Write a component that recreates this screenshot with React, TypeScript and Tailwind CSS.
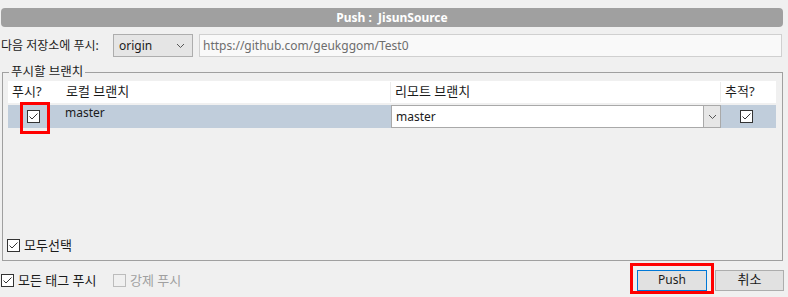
import React from 'react';

const font = "font-['Noto_Sans','Noto_Sans_CJK_KR',sans-serif]";

function Check({ checked = true, disabled = false }: { checked?: boolean; disabled?: boolean }) {
  return (
    <span
      className={`flex h-[13px] w-[13px] shrink-0 items-center justify-center border ${
        disabled ? 'border-[#bcbcbc] bg-[#f0f0f0]' : 'border-[#333333] bg-white'
      }`}
    >
      {checked && (
        <svg width="11" height="11" viewBox="0 0 11 11">
          <path d="M1.5 5.5 L4 8 L9.5 2.5" fill="none" stroke="#333333" strokeWidth="1" />
        </svg>
      )}
    </span>
  );
}

function Chevron() {
  return (
    <svg width="9" height="6" viewBox="0 0 9 6">
      <path d="M1 1 L4.5 4.5 L8 1" fill="none" stroke="#555555" strokeWidth="1" />
    </svg>
  );
}

export default function App() {
  return (
    <div className={`relative h-[297px] w-[788px] overflow-hidden bg-[#f0f0f0] text-[12px] text-[#1b1b1b] ${font}`}>
      {/* title */}
      <div className="pl-[1px] pt-[8px]">
        <div className="flex h-[19px] w-[782px] items-center justify-center rounded-[4px] bg-[#a0a0a0] font-bold text-white">
          Push :&nbsp; JisunSource
        </div>
      </div>

      {/* remote row */}
      <div className="mt-[7px] flex h-[23px] items-center">
        <span className="w-[113px] pl-[1px] leading-none">다음 저장소에 푸시:</span>
        <div className="flex h-[23px] w-[80px] items-center justify-between border border-[#adadad] bg-[#e5e5e5] pl-[5px] pr-[7px]">
          <span>origin</span>
          <Chevron />
        </div>
        <div className="ml-[6px] flex h-[23px] w-[583px] items-center border border-[#d0d0d0] bg-[#f9f9f9] pl-[3px] text-[#6d6d6d]">
          https://github.com/geukggom/Test0
        </div>
      </div>

      {/* branch group */}
      <div className="relative ml-[2px] mt-[15px] flex h-[189px] w-[781px] flex-col border border-[#a0a0a0]">
        <span className="absolute -top-[9px] left-[6px] bg-[#f0f0f0] px-[2px] text-[12.5px] leading-[16px]">푸시할 브랜치</span>

        <div className="ml-[5px] mt-[8px] w-[768px]">
          <div className="flex h-[22px] items-center bg-white text-[13px]">
            <div className="w-[52px] pl-[4px]">푸시?</div>
            <div className="w-[331px] border-r border-[#ececec] pl-[6px]">로컬 브랜치</div>
            <div className="w-[330px] border-r border-[#ececec] pl-[4px]">리모트 브랜치</div>
            <div className="flex-1 pl-[4px]">추적?</div>
          </div>

          <div className="mt-[2px] flex h-[23px] bg-[#c0cddb]">
            <div className="relative flex w-[52px] items-center pl-[19px]">
              <Check />
              <span className="absolute -top-[3px] left-[12px] h-[32px] w-[30px] border-[3px] border-[#ff0000]" />
            </div>
            <div className="w-[331px] pl-[5px] leading-[16px]">master</div>
            <div className="flex w-[330px] border border-[#a9a9a9] bg-white">
              <div className="flex flex-1 items-center pl-[4px]">master</div>
              <div className="flex w-[17px] items-center justify-center border-l border-[#a9a9a9] bg-[#e6e6e6]">
                <Chevron />
              </div>
            </div>
            <div className="flex flex-1 items-center pl-[19px]">
              <Check />
            </div>
          </div>
        </div>

        <div className="flex-1" />

        <div className="mb-[8px] ml-[4px] flex items-center gap-[4px] text-[13px] leading-none">
          <Check />
          <span>모두선택</span>
        </div>
      </div>

      {/* bottom row */}
      <div className="mt-[9px] flex h-[20px] items-center pr-[4px] text-[13px]">
        <div className="flex w-[113px] items-center gap-[4px] pl-[1px] leading-none">
          <Check />
          <span>모든 태그 푸시</span>
        </div>
        <div className="flex items-center gap-[4px] leading-none text-[#a0a0a0]">
          <Check checked={false} disabled />
          <span>강제 푸시</span>
        </div>
        <div className="ml-auto flex gap-[8px]">
          <div className="relative">
            <button className="flex h-[21px] w-[70px] items-center justify-center border border-[#0078d7] bg-[#e1e1e1] text-[12px]">
              Push
            </button>
            <span className="absolute -left-[7px] -top-[7px] h-[31px] w-[84px] border-[3px] border-[#ff0000]" />
          </div>
          <button className="flex h-[21px] w-[69px] items-center justify-center border border-[#adadad] bg-[#e1e1e1]">
            취소
          </button>
        </div>
      </div>
    </div>
  );
}
